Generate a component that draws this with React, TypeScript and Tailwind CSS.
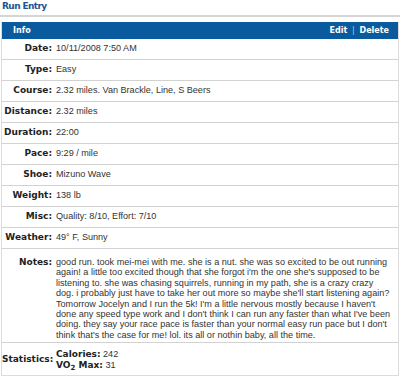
import React from 'react';

const rows: { label: string; value: string }[] = [
  { label: 'Date:', value: '10/11/2008 7:50 AM' },
  { label: 'Type:', value: 'Easy' },
  { label: 'Course:', value: '2.32 miles. Van Brackle, Line, S Beers' },
  { label: 'Distance:', value: '2.32 miles' },
  { label: 'Duration:', value: '22:00' },
  { label: 'Pace:', value: '9:29 / mile' },
  { label: 'Shoe:', value: 'Mizuno Wave' },
  { label: 'Weight:', value: '138 lb' },
  { label: 'Misc:', value: 'Quality: 8/10, Effort: 7/10' },
  { label: 'Weather:', value: '49° F, Sunny' },
];

const notes = [
  'good run. took mei-mei with me. she is a nut. she was so excited to be out running',
  "again! a little too excited though that she forgot i'm the one she's supposed to be",
  'listening to. she was chasing squirrels, running in my path, she is a crazy crazy',
  "dog. i probably just have to take her out more so maybe she'll start listening again?",
  "Tomorrow Jocelyn and I run the 5k! I'm a little nervous mostly because I haven't",
  "done any speed type work and I don't think I can run any faster than what I've been",
  "doing. they say your race pace is faster than your normal easy run pace but I don't",
  "think that's the case for me! lol. its all or nothin baby, all the time.",
];

const labelCls =
  "w-[50px] shrink-0 text-right font-['DejaVu_Sans',sans-serif] text-[9px] font-bold text-[#222]";
const valueCls = "pl-[4px] font-['Liberation_Sans',Arial,sans-serif] text-[9.1px] text-[#333]";

export default function App() {
  return (
    <div className="h-[379px] w-[400px] overflow-hidden bg-white">
      <div className="px-[2px] pt-[1px] font-['DejaVu_Sans',sans-serif] text-[9px] font-bold leading-[11px] tracking-[-0.6px] text-[#1b5598]">
        Run Entry
      </div>
      <div className="mt-[3px] h-[2px] bg-[#d6d6d6]" />

      {/* Info panel */}
      <div className="mx-[1px] mt-[5px] border-x border-b border-[#dcdcdc]">
        <div className="flex h-[17px] items-center justify-between bg-[#0a5a9e] pl-[11px] pr-[9px] font-['DejaVu_Sans',sans-serif] text-[8px] font-bold text-white">
          <span>Info</span>
          <span>
            Edit <span className="mx-[2px] font-normal text-white/70">|</span> Delete
          </span>
        </div>

        {rows.map((r) => (
          <div key={r.label} className="flex h-[21px] items-center border-b border-[#d2d2d2]">
            <span className={labelCls}>{r.label}</span>
            <span className={valueCls}>{r.value}</span>
          </div>
        ))}

        <div className="flex border-b border-[#d2d2d2] pb-[2px] pt-[8px]">
          <span className={labelCls + ' leading-[10.4px]'}>Notes:</span>
          <div className={valueCls + ' leading-[10.4px]'}>
            {notes.map((l) => (
              <div key={l} className="whitespace-nowrap">
                {l}
              </div>
            ))}
          </div>
        </div>

        <div className="flex items-center pb-[5px] pt-[6px]">
          <span className={labelCls}>Statistics:</span>
          <div className="pl-[4px] font-['Liberation_Sans',Arial,sans-serif] text-[9.1px] leading-[10.5px] text-[#333]">
            <div>
              <span className="font-['DejaVu_Sans',sans-serif] text-[9px] font-bold text-[#222]">Calories:</span> 242
            </div>
            <div>
              <span className="font-['DejaVu_Sans',sans-serif] text-[9px] font-bold text-[#222]">
                VO<sub className="text-[7px]">2</sub> Max:
              </span>{' '}
              31
            </div>
          </div>
        </div>
      </div>
    </div>
  );
}
